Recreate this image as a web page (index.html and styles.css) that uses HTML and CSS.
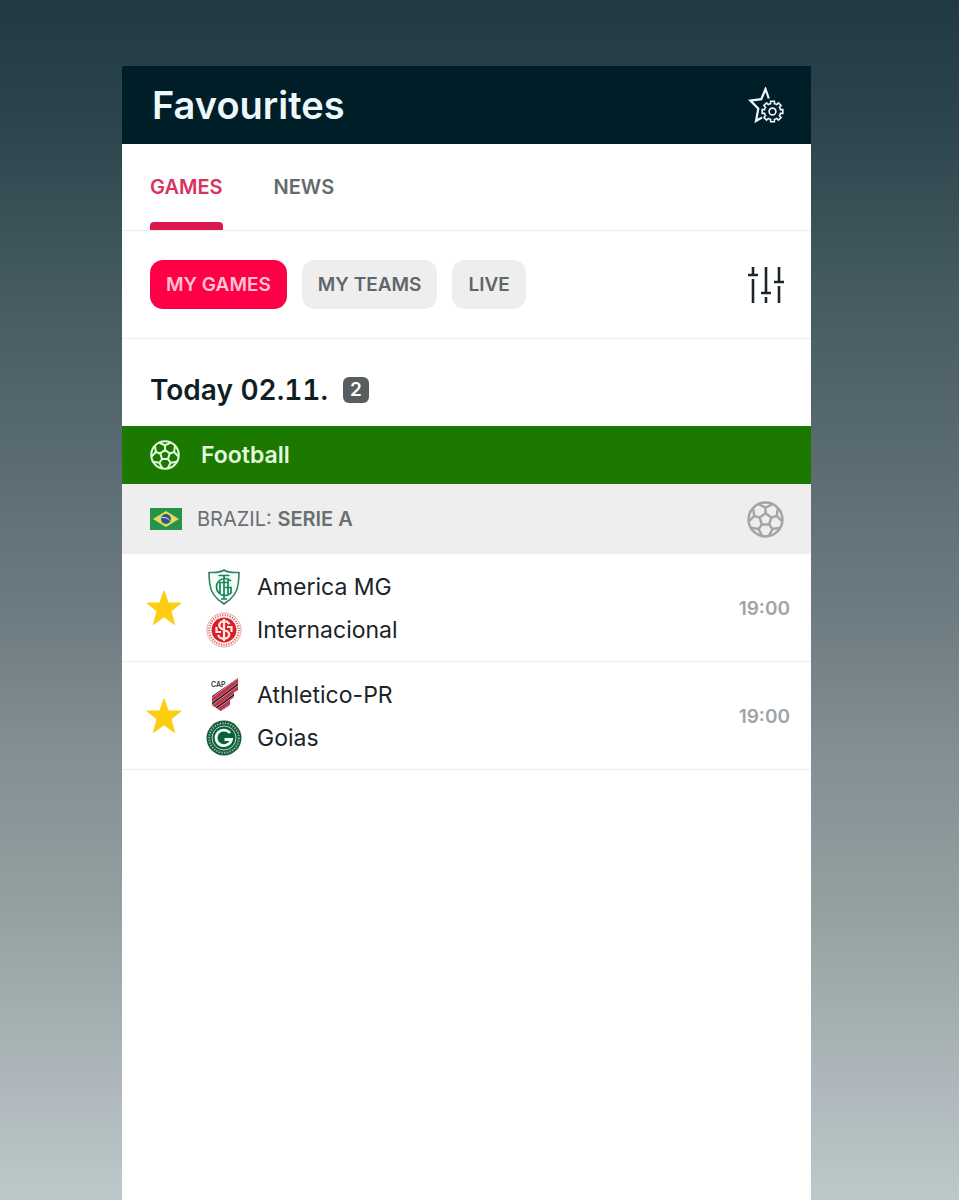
FILE: index.html
```html
<!DOCTYPE html>
<html lang="en">
<head>
<meta charset="utf-8">
<meta name="viewport" content="width=device-width, initial-scale=1">
<title>Favourites</title>
<link rel="stylesheet" href="styles.css">
</head>
<body>
<svg class="sprite" aria-hidden="true">
  <symbol id="ball" viewBox="-18 -18 36 36">
    <g fill="none" stroke="currentColor" stroke-width="2.4" stroke-linejoin="round">
      <circle r="16.5"/>
      <path d="M0-6 5.7-1.9 3.5 4.9H-3.5L-5.7-1.9Z"/>
      <g id="seam"><path d="M0-6V-11.5M-7-15 0-11.5 7-15"/></g>
      <use href="#seam" transform="rotate(72)"/>
      <use href="#seam" transform="rotate(144)"/>
      <use href="#seam" transform="rotate(216)"/>
      <use href="#seam" transform="rotate(288)"/>
    </g>
  </symbol>
  <symbol id="star" viewBox="0 0 36 36">
    <path fill="#fdcd10" stroke="#fdcd10" stroke-linejoin="round" d="M18 1 22.3 13H35L25 21.2 28.6 34.5 18 26.8 7.4 34.5 11 21.2 1 13H13.7Z"/>
  </symbol>
</svg>
<main class="app">
  <header class="bar">
    <h1 class="bar-title">Favourites</h1>
    <button class="icon-button" type="button" aria-label="Favourites settings">
      <svg class="icon" viewBox="0 0 36 36" fill="none" stroke="currentColor">
        <path stroke-width="2.2" d="M20.8 11.5 17.5 2 13.3 12.2 2.3 13.6 10.3 21.6 8 34 14 30.5"/>
        <g transform="translate(24.5 24.5)" stroke-width="1.6">
          <g id="tooth"><path d="M-3.2-7.5A8 8 0 0 1-1.9-7.9V-10.3H1.9V-7.9A8 8 0 0 1 3.200-7.500"/></g>
          <use href="#tooth" transform="rotate(45)"/>
          <use href="#tooth" transform="rotate(90)"/>
          <use href="#tooth" transform="rotate(135)"/>
          <use href="#tooth" transform="rotate(180)"/>
          <use href="#tooth" transform="rotate(225)"/>
          <use href="#tooth" transform="rotate(270)"/>
          <use href="#tooth" transform="rotate(315)"/>
          <circle r="3.4"/>
        </g>
      </svg>
    </button>
  </header>
  <nav class="tabs" aria-label="Favourites">
    <a class="tab tab-active" href="#games" aria-current="page">GAMES</a>
    <a class="tab" href="#news">NEWS</a>
  </nav>
  <div class="filters">
    <button class="chip chip-active" type="button" aria-pressed="true">MY GAMES</button>
    <button class="chip" type="button" aria-pressed="false">MY TEAMS</button>
    <button class="chip" type="button" aria-pressed="false">LIVE</button>
    <button class="icon-button filter-button" type="button" aria-label="Filter">
      <svg class="icon" viewBox="0 0 36 36" fill="none" stroke="currentColor" stroke-width="2.6">
        <path d="M5 0V8M0 8H10M5 12V36M18 0V26M13 26H23M18 30V36M31 0V15M26 15H36M31 19V36"/>
      </svg>
    </button>
  </div>
  <section id="games">
    <div class="day">
      <h2 class="day-title">Today 02.11.</h2>
      <span class="count">2</span>
    </div>
    <h3 class="sport">
      <svg class="sport-icon" aria-hidden="true"><use href="#ball"/></svg>
      Football
    </h3>
    <div class="league">
      <svg class="flag" viewBox="0 0 32 22" role="img" aria-label="Brazil">
        <path fill="#259349" d="M0 0H32V22H0Z"/>
        <path fill="#e6dc5c" d="M16 3 29 11 16 19 3 11Z"/>
        <circle cx="16" cy="11" r="5" fill="#31578c"/>
        <path fill="none" stroke="#d5e3e4" d="M11.5 9.5Q17 8.8 20.4 13"/>
      </svg>
      <span class="league-name">BRAZIL: <strong>SERIE A</strong></span>
      <svg class="league-icon" aria-hidden="true"><use href="#ball"/></svg>
    </div>
    <ul class="matches">
      <li class="match">
        <button class="icon-button" type="button" aria-label="Remove from favourites" aria-pressed="true">
          <svg class="icon"><use href="#star"/></svg>
        </button>
        <div class="teams">
          <div class="team">
            <svg class="crest" viewBox="0 0 36 36" aria-hidden="true">
              <path fill="#f3fbf7" stroke="#367d61" stroke-width="1.6" d="M18 1Q14 4 3 3.500Q3 9 3.800 15Q5 27 18 35Q31 27 32.200 15Q33 9 33 3.500Q22 4 18 1Z"/>
              <path fill="none" stroke="#16845a" stroke-width="1.700" d="M25 12A8.500 8.500 0 1 0 25 24V18.500H19M18 6V30M12.500 6.500H23.500M15 30H21M14 25V13.500H22M22 10V25"/>
            </svg>
            <span>America MG</span>
          </div>
          <div class="team">
            <svg class="crest" viewBox="0 0 36 36" aria-hidden="true">
              <circle cx="18" cy="18" r="17" fill="#fff" stroke="#e9a4a2"/>
              <circle cx="18" cy="18" r="14.800" fill="none" stroke="#dd5553" stroke-width="2" stroke-dasharray="1.200 1.300"/>
              <circle cx="18" cy="18" r="12.500" fill="#d81f26"/>
              <path fill="none" stroke="#ffe9e4" stroke-width="2.200" d="M23.500 12Q20 7.500 15 10Q11 14 16 17L21 19Q25.500 23 21 26Q15 28.500 12 23M18 7V29M10.500 15V20H15M25.500 20V15H21"/>
            </svg>
            <span>Internacional</span>
          </div>
        </div>
        <time class="kickoff">19:00</time>
      </li>
      <li class="match">
        <button class="icon-button" type="button" aria-label="Remove from favourites" aria-pressed="true">
          <svg class="icon"><use href="#star"/></svg>
        </button>
        <div class="teams">
          <div class="team">
            <svg class="crest" viewBox="0 0 36 36" aria-hidden="true">
              <clipPath id="cap-shape"><path d="M32 1V13L28 15V20L24 23V28L15 34 6 28V19Z"/></clipPath>
              <g clip-path="url(#cap-shape)">
                <path fill="#30191f" d="M0 0H36V36H0Z"/>
                <path fill="none" stroke="#e8b4be" stroke-width="4.400" d="M0 27.500 36 .5M0 35 36 8M6 38 42 11"/>
                <path fill="none" stroke="#c03350" stroke-width="3.400" d="M0 27.500 36 .5M0 35 36 8M6 38 42 11"/>
              </g>
              <text class="cap-text" x="5" y="10">CAP</text>
            </svg>
            <span>Athletico-PR</span>
          </div>
          <div class="team">
            <svg class="crest" viewBox="0 0 36 36" aria-hidden="true">
              <circle cx="18" cy="18" r="17.500" fill="#175b3c"/>
              <circle cx="18" cy="18" r="14.800" fill="none" stroke="#8db9a0" stroke-width="2" stroke-dasharray="1.400 1.300"/>
              <circle cx="18" cy="18" r="12" fill="#08613b" stroke="#b9dcc5"/>
              <path fill="none" stroke="#f4fff7" stroke-width="2.800" d="M24 13A7.800 7.800 0 1 0 25.500 19.500H18.500"/>
            </svg>
            <span>Goias</span>
          </div>
        </div>
        <time class="kickoff">19:00</time>
      </li>
    </ul>
  </section>
</main>
</body>
</html>
```
FILE: styles.css
```css
* {
  box-sizing: border-box;
}

body {
  margin: 0;
  min-height: 100vh;
  padding: 66px 148px 0 122px;
  display: flex;
  font-family: Inter, "Liberation Sans", sans-serif;
  color: #1b2429;
  background: linear-gradient(#213943, #2c444c 10%, #465c62 25%, #6b7a80 50%, #818e94 62%, #939f9f 75%, #afb9bd 91%, #bcc8c9);
}

h1, h2, h3, ul {
  margin: 0;
  padding: 0;
}

button {
  border: 0;
  font: inherit;
  cursor: pointer;
}

.sprite {
  position: absolute;
  width: 0;
  height: 0;
}

.app {
  flex: 1;
  min-width: 0;
  background: #fff;
}

.icon-button {
  display: flex;
  padding: 0;
  background: none;
  color: inherit;
}

.icon {
  width: 36px;
  height: 36px;
}

.bar {
  display: flex;
  align-items: center;
  justify-content: space-between;
  height: 78px;
  padding: 0 27px 0 30px;
  background: #001e28;
  color: #edf8fc;
}

.bar-title {
  font-size: 38px;
  font-weight: 600;
}

.tabs {
  display: flex;
  gap: 51px;
  height: 87px;
  padding: 0 28px;
  border-bottom: 1px solid #ebeded;
}

.tab {
  display: flex;
  align-items: center;
  font-size: 20px;
  font-weight: 600;
  text-decoration: none;
  color: #656b6d;
}

.tab-active {
  position: relative;
  color: #d8345d;
}

.tab-active::after {
  content: "";
  position: absolute;
  inset: auto 0 0;
  height: 8px;
  border-radius: 4px 4px 0 0;
  background: #dc1749;
}

.filters {
  display: flex;
  align-items: center;
  gap: 15px;
  height: 108px;
  padding: 0 27px 0 28px;
  border-bottom: 1px solid #ebeded;
}

.chip {
  height: 49px;
  padding: 0 16px;
  border-radius: 13px;
  font-size: 19px;
  font-weight: 600;
  color: #616668;
  background: #eee;
}

.chip-active {
  color: #ffc3d3;
  background: #ff0046;
}

.filter-button {
  margin-left: auto;
}

.day {
  display: flex;
  align-items: center;
  gap: 15px;
  height: 87px;
  padding: 14px 28px 0;
}

.day-title {
  font-size: 28px;
  font-weight: 600;
  font-variant-numeric: tabular-nums;
  color: #101e24;
}

.count {
  width: 26px;
  border-radius: 6px;
  font-size: 19px;
  font-weight: 600;
  line-height: 26px;
  text-align: center;
  color: #fff;
  background: #585e60;
}

.sport {
  display: flex;
  align-items: center;
  gap: 21px;
  height: 58px;
  padding: 0 28px;
  font-size: 23px;
  font-weight: 600;
  color: #e2f8dc;
  background: #1b7900;
}

.sport-icon {
  width: 30px;
  height: 30px;
}

.league {
  display: flex;
  align-items: center;
  gap: 15px;
  height: 70px;
  padding: 0 27px 0 28px;
  font-size: 20px;
  color: #6a6f71;
  background: #eee;
}

.league strong {
  font-weight: 600;
}

.flag {
  width: 32px;
  height: 22px;
}

.league-icon {
  width: 37px;
  height: 37px;
  margin-left: auto;
  color: #a3a5a6;
}

.matches {
  list-style: none;
}

.match {
  display: flex;
  align-items: center;
  gap: 24px;
  height: 108px;
  padding: 1px 21px 0 24px;
  border-bottom: 1px solid #ebeded;
}

.teams {
  display: flex;
  flex-direction: column;
  gap: 7px;
}

.team {
  display: flex;
  align-items: center;
  gap: 15px;
  font-size: 23px;
}

.crest {
  width: 36px;
  height: 36px;
}

.cap-text {
  font-size: 7px;
  font-weight: 600;
  fill: #333;
}

.kickoff {
  margin-left: auto;
  font-size: 19px;
  font-weight: 600;
  color: #a0a4a6;
}
```
